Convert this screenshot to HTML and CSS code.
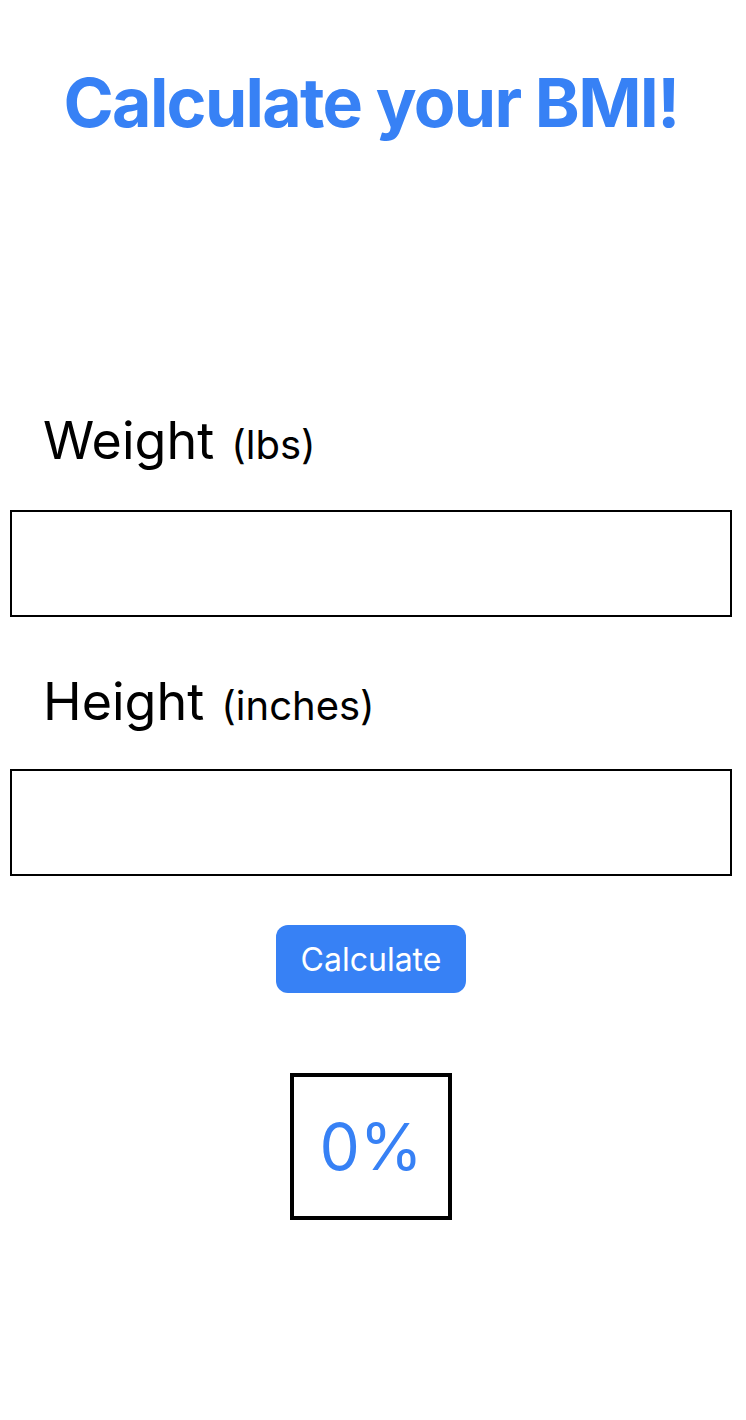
FILE: index.html
```html
<!DOCTYPE html>
<html lang="en">
<head>
<meta charset="utf-8">
<title>BMI Calculator</title>
<link rel="stylesheet" href="styles.css">
</head>
<body>
<main class="screen">
  <h1 class="title">Calculate your BMI!</h1>

  <section class="form">
    <label class="field-label field-label--weight" for="weight">
      <span class="field-name">Weight</span>
      <span class="field-unit">(lbs)</span>
    </label>
    <input class="field-input field-input--weight" id="weight" type="text">

    <label class="field-label field-label--height" for="height">
      <span class="field-name">Height</span>
      <span class="field-unit">(inches)</span>
    </label>
    <input class="field-input field-input--height" id="height" type="text">
  </section>

  <div class="actions">
    <button class="calc-button" type="button">Calculate</button>
  </div>

  <div class="result-wrap">
    <div class="result">0%</div>
  </div>
</main>
</body>
</html>
```

FILE: styles.css
```css
html, body {
  margin: 0;
  padding: 0;
  background: #ffffff;
}

body {
  font-family: Inter, "Liberation Sans", Arial, sans-serif;
  color: #000000;
}

.screen {
  width: 746px;
  min-height: 1420px;
  display: flex;
  flex-direction: column;
}

.title {
  margin: 62px 0 0;
  font-size: 68px;
  line-height: 80px;
  font-weight: 700;
  color: #3781f5;
  text-align: center;
  letter-spacing: -1.7px;
  padding-right: 4px;
}

.form {
  display: flex;
  flex-direction: column;
  margin-top: 269px;
}

.field-label {
  display: flex;
  align-items: baseline;
  gap: 17px;
  padding-left: 43px;
  line-height: 60px;
}

.field-label--height {
  margin-top: 55px;
}

.field-name {
  font-size: 52px;
  font-weight: 400;
}

.field-unit {
  font-size: 40px;
  font-weight: 400;
}

.field-input {
  box-sizing: border-box;
  display: block;
  margin: 0 15px 0 10px;
  width: 722px;
  height: 107px;
  border: 2px solid #000000;
  border-radius: 0;
  background: #ffffff;
  padding: 0 12px;
  font: inherit;
  font-size: 32px;
  outline: none;
}

.field-input--weight {
  margin-top: 35px;
}

.field-input--height {
  margin-top: 33px;
}

.actions {
  display: flex;
  justify-content: center;
  margin-top: 49px;
}

.calc-button {
  width: 190px;
  height: 68px;
  margin-right: 4px;
  border: none;
  border-radius: 12px;
  background: #3781f5;
  color: #ffffff;
  font-family: inherit;
  font-size: 32px;
  font-weight: 400;
  cursor: pointer;
}

.result-wrap {
  display: flex;
  justify-content: center;
  margin-top: 80px;
}

.result {
  box-sizing: border-box;
  width: 162px;
  height: 147px;
  margin-right: 4px;
  border: 4px solid #000000;
  display: flex;
  align-items: center;
  justify-content: center;
  font-size: 64px;
  color: #3781f5;
}
```
